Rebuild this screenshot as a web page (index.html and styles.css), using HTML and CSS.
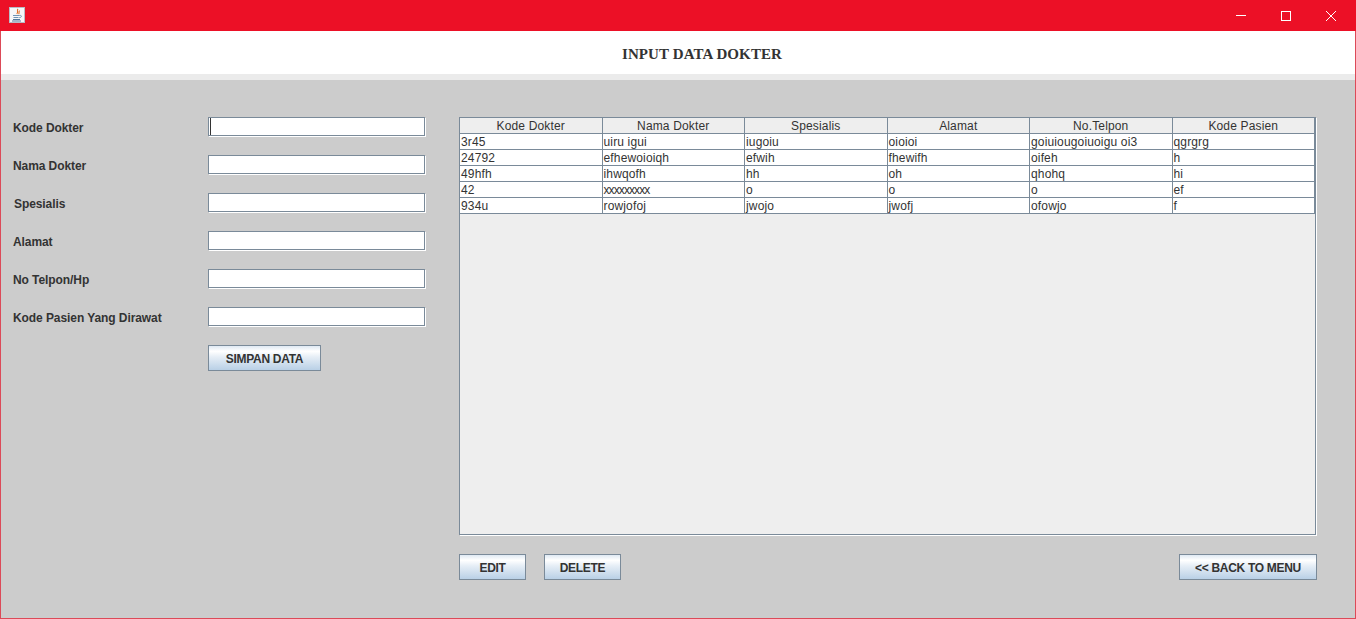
FILE: index.html
```html
<!DOCTYPE html>
<html lang="en">
<head>
    <meta charset="UTF-8">
    <meta name="viewport" content="width=device-width, initial-scale=1.0">
    <title>Input Data Dokter</title>
    <link rel="stylesheet" href="styles.css">
</head>
<body>
    <div class="window">
        <div class="titlebar">
            <svg class="app-icon" width="16" height="16" viewBox="0 0 16 16">
                <rect x="0.5" y="0.5" width="15" height="15" fill="#f6f6f8" stroke="#b9bcc6"/>
                <path d="M9 2C7.4 3.6 9.8 4.6 7.8 7M10.6 3.6C9.2 5 10.8 5.8 9.6 7.2" fill="none" stroke="#e0702a" stroke-width="1.1"/>
                <path d="M4 8.5h6.5M10.5 8.5c2.6-.5 2.6 2-.3 2.2M4.5 10.5h5" fill="none" stroke="#6f93b4" stroke-width="1"/>
                <path d="M4 12.5h7M3 14h9" fill="none" stroke="#54789c" stroke-width="1"/>
            </svg>
            <div class="controls">
                <span class="control">
                    <svg width="12" height="12" viewBox="0 0 12 12"><path d="M1 5.5h10" stroke="#fff" fill="none"/></svg>
                </span>
                <span class="control">
                    <svg width="12" height="12" viewBox="0 0 12 12"><rect x="1.5" y="1.5" width="9" height="9" stroke="#fff" fill="none"/></svg>
                </span>
                <span class="control">
                    <svg width="12" height="12" viewBox="0 0 12 12"><path d="M1 1l10 10M11 1L1 11" stroke="#fff" fill="none"/></svg>
                </span>
            </div>
        </div>
        <h1 class="heading">INPUT DATA DOKTER</h1>
        <div class="content">
            <form class="form-side">
                <div class="field">
                    <label for="kode">Kode Dokter</label>
                    <input type="text" id="kode" class="focused">
                </div>
                <div class="field">
                    <label for="nama">Nama Dokter</label>
                    <input type="text" id="nama">
                </div>
                <div class="field">
                    <label for="spesialis" class="nudge">Spesialis</label>
                    <input type="text" id="spesialis">
                </div>
                <div class="field">
                    <label for="alamat">Alamat</label>
                    <input type="text" id="alamat">
                </div>
                <div class="field">
                    <label for="telpon">No Telpon/Hp</label>
                    <input type="text" id="telpon">
                </div>
                <div class="field">
                    <label for="pasien">Kode Pasien Yang Dirawat</label>
                    <input type="text" id="pasien">
                </div>
                <button type="button" class="btn btn-save">SIMPAN DATA</button>
            </form>
            <div class="table-side">
                <div class="table-panel">
                    <table>
                        <thead>
                            <tr>
                                <th>Kode Dokter</th>
                                <th>Nama Dokter</th>
                                <th>Spesialis</th>
                                <th>Alamat</th>
                                <th>No.Telpon</th>
                                <th>Kode Pasien</th>
                            </tr>
                        </thead>
                        <tbody>
                            <tr><td>3r45</td><td>uiru igui</td><td>iugoiu</td><td>oioioi</td><td>goiuiougoiuoigu oi3</td><td>qgrgrg</td></tr>
                            <tr><td>24792</td><td>efhewoioiqh</td><td>efwih</td><td>fhewifh</td><td>oifeh</td><td>h</td></tr>
                            <tr><td>49hfh</td><td>ihwqofh</td><td>hh</td><td>oh</td><td>qhohq</td><td>hi</td></tr>
                            <tr><td>42</td><td class="tight">xxxxxxxxx</td><td>o</td><td>o</td><td>o</td><td>ef</td></tr>
                            <tr><td>934u</td><td>rowjofoj</td><td>jwojo</td><td>jwofj</td><td>ofowjo</td><td>f</td></tr>
                        </tbody>
                    </table>
                </div>
                <div class="actions">
                    <button type="button" class="btn btn-edit">EDIT</button>
                    <button type="button" class="btn btn-delete">DELETE</button>
                    <button type="button" class="btn btn-back">&lt;&lt; BACK TO MENU</button>
                </div>
            </div>
        </div>
    </div>
</body>
</html>
```

FILE: styles.css
```css
* {
    box-sizing: border-box;
}
html, body {
    margin: 0;
    padding: 0;
}
body {
    font-family: "Liberation Sans", Arial, sans-serif;
    font-size: 12px;
    color: #333;
    overflow: hidden;
}
.window {
    width: 1356px;
    height: 619px;
    display: flex;
    flex-direction: column;
    border: 1px solid #dc4a58;
    border-top: none;
    background-color: #cccccc;
}
.titlebar {
    height: 31px;
    margin: 0 -1px;
    padding-left: 9px;
    display: flex;
    align-items: center;
    justify-content: space-between;
    background-color: #ec1026;
}
.app-icon {
    margin-bottom: 1px;
}
.controls {
    display: flex;
    padding-right: 3px;
}
.control {
    width: 45px;
    height: 30px;
    display: flex;
    align-items: center;
    justify-content: center;
}
.heading {
    margin: 0;
    height: 49px;
    padding: 3px 0 0 48px;
    line-height: 40px;
    text-align: center;
    font-family: "Liberation Serif", "Times New Roman", serif;
    font-size: 15px;
    font-weight: bold;
    letter-spacing: 0.1px;
    color: #333;
    background-color: #fff;
    border-bottom: 6px solid #ebebeb;
}
.content {
    flex: 1;
    display: flex;
    padding-top: 37px;
}
.form-side {
    width: 458px;
    padding-left: 12px;
}
.field {
    display: flex;
    align-items: center;
    height: 19px;
    margin-bottom: 19px;
}
.field label {
    width: 195px;
    font-weight: bold;
    letter-spacing: -0.08px;
    padding-top: 2px;
}
.field label.nudge {
    padding-left: 1px;
}
.field input {
    width: 217px;
    height: 19px;
    padding: 0 2px;
    border: 1px solid #7a8a99;
    border-radius: 0;
    background-color: #fff;
    box-shadow: 1px 1px 0 #fff;
    outline: none;
}
.field input.focused {
    background: linear-gradient(#333, #333) 1px 0 / 1px 17px no-repeat, #fff;
}
.btn {
    height: 26px;
    padding: 1px 0 0;
    font-family: "Liberation Sans", Arial, sans-serif;
    font-size: 12px;
    font-weight: bold;
    letter-spacing: -0.3px;
    color: #333;
    border: 1px solid #7a8a99;
    border-radius: 0;
    background: linear-gradient(#dfe9f3, #ffffff 22%, #e6eef6 45%, #b9d0e6);
}
.btn-save {
    width: 113px;
    margin-left: 195px;
}
.table-side {
    width: 858px;
}
.table-panel {
    width: 857px;
    height: 418px;
    background-color: #eeeeee;
    border: 1px solid #7a8a99;
    box-shadow: 1px 1px 0 #fff;
}
table {
    width: 855px;
    table-layout: fixed;
    border-collapse: separate;
    border-spacing: 0;
    font-size: 12px;
}
th, td {
    height: 16px;
    padding: 1px 1px 0;
    border-right: 1px solid #7a8a99;
    border-bottom: 1px solid #7a8a99;
    white-space: nowrap;
    overflow: hidden;
    line-height: 14px;
    letter-spacing: 0.15px;
}
th {
    font-weight: normal;
    text-align: center;
    background-color: #eeeeee;
}
td {
    background-color: #fff;
}
td.tight {
    letter-spacing: -0.9px;
}
.actions {
    display: flex;
    margin-top: 19px;
}
.btn-edit {
    width: 67px;
}
.btn-delete {
    width: 77px;
    margin-left: 18px;
}
.btn-back {
    width: 138px;
    margin-left: auto;
}
```
